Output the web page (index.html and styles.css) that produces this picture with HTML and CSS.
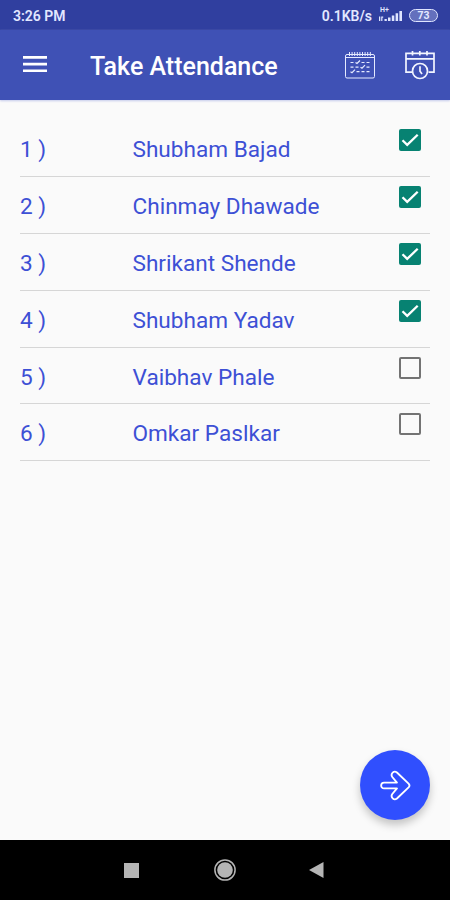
FILE: index.html
```html
<!DOCTYPE html>
<html lang="en">
<head>
<meta charset="utf-8">
<title>Take Attendance</title>
<link rel="stylesheet" href="styles.css">
</head>
<body>
<div class="screen">
  <header class="status">
    <span class="time">3:26 PM</span>
    <span class="rate">0.1KB/s</span>
    <span class="signal">
      <span class="network">H+</span>
      <svg width="24" height="16" viewBox="0 0 24 16" fill="#dfe5ff"><path d="M0 8.500h1.300V13H0zM2.200 8.500h2v1.200h-.8V13H2.200zM5.500 11h2.300v2H5.500zM9 9.500h2.500V13H9zM12.800 7.500h2.500V13h-2.500zM16.600 5.200h2.500V13h-2.500zM20.400 3h2.600v10h-2.600z"/></svg>
    </span>
    <span class="battery">73</span>
  </header>
  <nav class="appbar">
    <svg class="menu" width="24" height="18" viewBox="0 0 24 18" fill="#fff"><path d="M0 1h24v2.700H0zM0 7.700h24v2.700H0zM0 14.400h24v2.700H0z"/></svg>
    <h1 class="title">Take Attendance</h1>
    <svg class="calendar" width="30" height="27" viewBox="0 0 30 27" fill="none" stroke="#e6ebff" stroke-width="1">
      <rect x=".5" y="2.500" width="29" height="23.500" rx="1.500"/>
      <path d="M.5 5.500h29"/>
      <path d="M4.500 0v4M7.100 0v4M9.700 0v4M12.300 0v4M14.900 0v4M17.500 0v4M20.100 0v4M22.700 0v4M25.300 0v4"/>
      <path d="M5.500 10.500h3M10.500 10.500l1.500 1 3-3M16.500 10.500h3M21.500 10.500h3M5.500 15.200h3M10.500 15.200h3M15.500 15.200l1.500 1 3-3M21.500 15.200h3M5.500 19.700l1.500 1 3-3M11.500 19.700h3M16.500 19.700h3M21.500 19.700h3" stroke-width="1.200"/>
    </svg>
    <svg class="schedule" width="30" height="30" viewBox="0 0 30 30" fill="none" stroke="#f2f5ff" stroke-width="1.700">
      <path d="M7.500 22.200H1V3.300h28v18.900h-5.500M1 8.800h28M7.500 1v4.500M14.800 1v4.500M22 1v4.500"/>
      <circle cx="15" cy="21" r="7.500"/>
      <path d="M15 16.200v5l2 2.800"/>
    </svg>
  </nav>
  <main class="content">
    <ol class="list">
      <li class="row"><span class="num">1 )</span><span class="name">Shubham Bajad</span><span class="box checked"><svg width="22" height="22" viewBox="0 0 22 22"><path d="M3.500 11.200l4.700 4.700L18.700 5.700"/></svg></span></li>
      <li class="row"><span class="num">2 )</span><span class="name">Chinmay Dhawade</span><span class="box checked"><svg width="22" height="22" viewBox="0 0 22 22"><path d="M3.500 11.200l4.700 4.700L18.700 5.700"/></svg></span></li>
      <li class="row"><span class="num">3 )</span><span class="name">Shrikant Shende</span><span class="box checked"><svg width="22" height="22" viewBox="0 0 22 22"><path d="M3.500 11.200l4.700 4.700L18.700 5.700"/></svg></span></li>
      <li class="row"><span class="num">4 )</span><span class="name">Shubham Yadav</span><span class="box checked"><svg width="22" height="22" viewBox="0 0 22 22"><path d="M3.500 11.200l4.700 4.700L18.700 5.700"/></svg></span></li>
      <li class="row"><span class="num">5 )</span><span class="name">Vaibhav Phale</span><span class="box"></span></li>
      <li class="row"><span class="num">6 )</span><span class="name">Omkar Paslkar</span><span class="box"></span></li>
    </ol>
    <button class="fab" aria-label="Next">
      <svg width="31" height="31" viewBox="0 0 32 32" fill="none" stroke="#fff" stroke-width="1.900" stroke-linejoin="round"><path d="M4.200 13H17.500L12.700 7.200C10.500 4 14.300 0 17.500 2.600L29.500 14C30.700 15.300 30.700 16.700 29.500 18L17.500 29.400C14.300 32 10.500 28 12.700 24.800L17.500 19H4.200C.2 19 .2 13 4.200 13Z"/></svg>
    </button>
  </main>
  <footer class="navbar">
    <svg width="15" height="15" viewBox="0 0 15 15"><path d="M0 0h15v15H0z" fill="#b5b5b5"/></svg>
    <svg class="home" width="22" height="22" viewBox="0 0 22 22"><circle cx="11" cy="11" r="10.100" fill="none" stroke="#b5b5b5" stroke-width="1.500"/><circle cx="11" cy="11" r="7.800" fill="#b5b5b5"/></svg>
    <svg width="15" height="16" viewBox="0 0 15 16"><path d="M0 8L14.500 0v16z" fill="#b5b5b5"/></svg>
  </footer>
</div>
</body>
</html>
```

FILE: styles.css
```css
* {
  box-sizing: border-box;
}

body {
  margin: 0;
  font-family: Roboto, sans-serif;
}

.screen {
  display: flex;
  flex-direction: column;
  width: 450px;
  height: 900px;
  background: #fafafa;
}

.status {
  display: flex;
  align-items: center;
  height: 30px;
  padding: 1px 12px 0 13px;
  background: #303f9f;
  color: #e3e8ff;
  font-size: 14px;
  font-weight: 600;
}

.rate {
  margin-left: auto;
  font-size: 14px;
}

.signal {
  position: relative;
  width: 24px;
  height: 16px;
  margin: 0 6px 0 7px;
}

.signal svg {
  display: block;
}

.network {
  position: absolute;
  left: 1px;
  top: -1px;
  font-size: 7px;
  line-height: 7px;
}

.battery {
  width: 29px;
  height: 13px;
  margin-top: -1px;
  border: 1.5px solid #dfe5ff;
  border-radius: 7px;
  background: #6470bd;
  font-size: 10.5px;
  font-weight: 700;
  line-height: 11.5px;
  text-align: center;
}

.appbar {
  display: flex;
  align-items: center;
  height: 70px;
  padding: 0 15px 0 23px;
  background: #3f51b5;
  box-shadow: 0 1px 2px #c5caeb;
}

.menu {
  margin-top: -2px;
}

.title {
  margin: 3px 0 0 43px;
  color: #fff;
  font-size: 25px;
  font-weight: 500;
  line-height: 30px;
}

.calendar {
  margin-left: auto;
}

.schedule {
  margin-left: 30px;
}

.content {
  position: relative;
  flex: 1;
  padding: 20px 20px 0;
}

.list {
  margin: 0;
  padding: 0;
  list-style: none;
}

.row {
  display: flex;
  height: 56.9px;
  border-bottom: 1px solid #d6d6d6;
  color: #3d50d5;
  font-size: 22.6px;
  line-height: 59.6px;
}

.num {
  width: 112.5px;
}

.name {
  flex: 1;
}

.box {
  width: 22px;
  height: 22px;
  margin: 9px 9px 0 0;
  border: 2px solid #737373;
  border-radius: 2px;
}

.checked {
  border: 0;
  background: #078272;
}

.box svg {
  display: block;
  fill: none;
  stroke: #fff;
  stroke-width: 2.3;
}

.fab {
  position: absolute;
  right: 20px;
  bottom: 20px;
  display: grid;
  place-items: center;
  width: 70px;
  height: 70px;
  padding: 0;
  border: 0;
  border-radius: 50%;
  background: #304ffe;
  box-shadow: 0 5px 8px rgba(0, 0, 0, .22);
}

.navbar {
  display: flex;
  align-items: center;
  justify-content: space-between;
  height: 60px;
  padding: 0 126px 0 124px;
  background: #000;
}

.home {
  margin-left: 2px;
}
```
